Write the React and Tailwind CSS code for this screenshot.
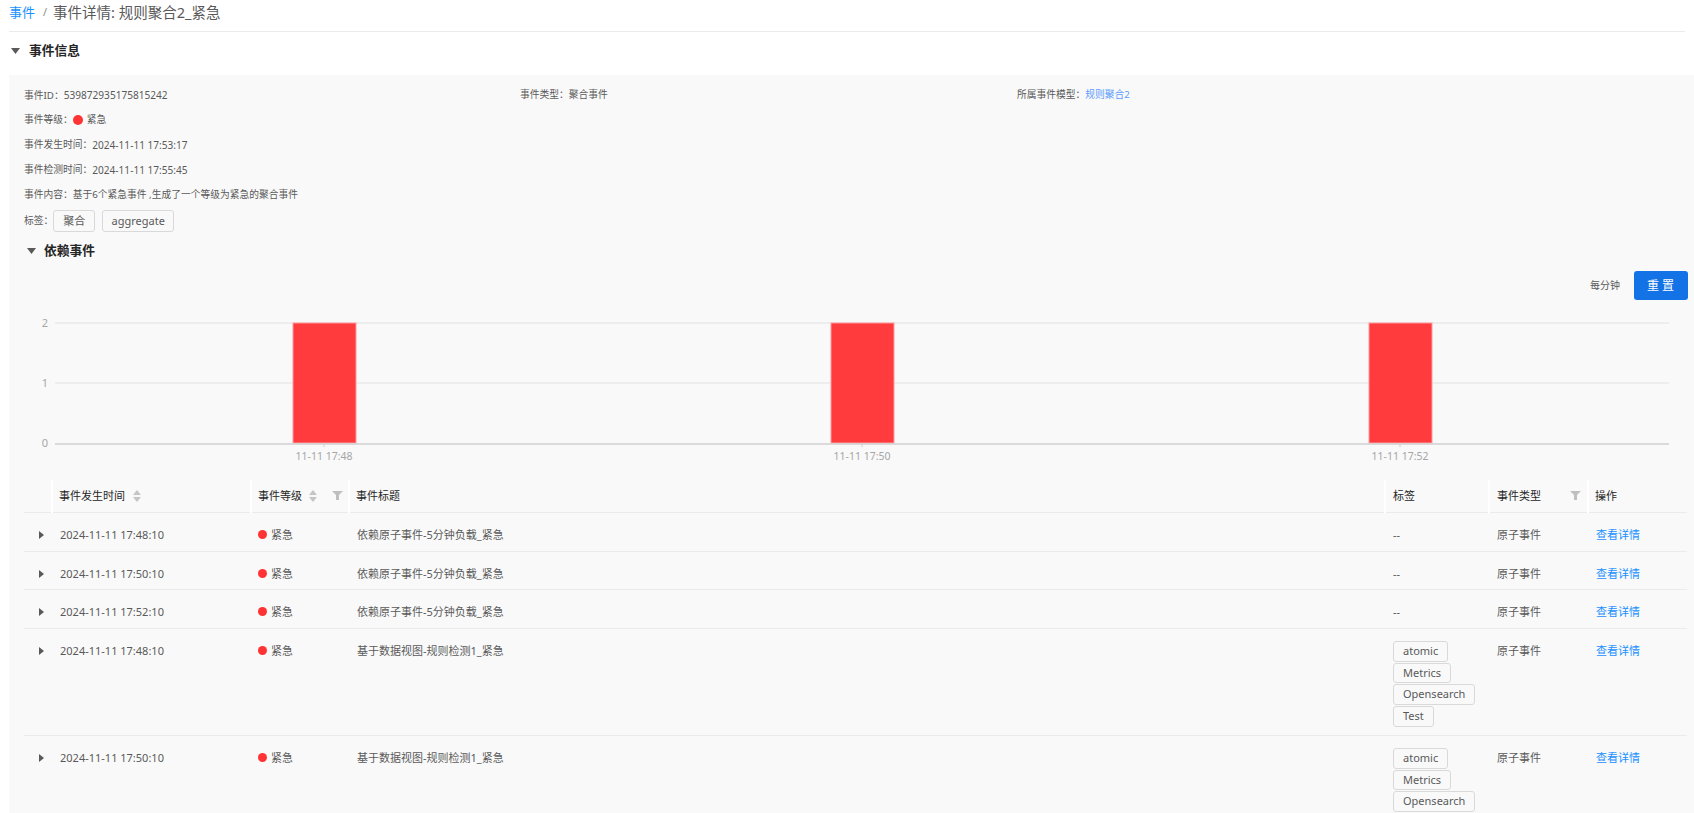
const rows = [
  { time: "2024-11-11 17:48:10", title: "依赖原子事件-5分钟负载_紧急", height: "h-[39px]" },
  { time: "2024-11-11 17:50:10", title: "依赖原子事件-5分钟负载_紧急", height: "h-[38px]" },
  { time: "2024-11-11 17:52:10", title: "依赖原子事件-5分钟负载_紧急", height: "h-[39px]" },
  {
    time: "2024-11-11 17:48:10",
    title: "基于数据视图-规则检测1_紧急",
    height: "h-[107px]",
    tags: ["atomic", "Metrics", "Opensearch", "Test"],
  },
  {
    time: "2024-11-11 17:50:10",
    title: "基于数据视图-规则检测1_紧急",
    height: "h-[107px]",
    tags: ["atomic", "Metrics", "Opensearch", "Test"],
  },
];

function Caret() {
  return (
    <svg width="9" height="6" viewBox="0 0 9 6" className="shrink-0">
      <path d="M0 0H9L4.5 6Z" fill="#595959" />
    </svg>
  );
}

function ExpandCaret() {
  return (
    <svg width="5" height="8" viewBox="0 0 5 8">
      <path d="M0 0L5 4L0 8Z" fill="#595959" />
    </svg>
  );
}

function SortIcon() {
  return (
    <svg width="8" height="12" viewBox="0 0 8 12" className="shrink-0">
      <path d="M4 0L8 5H0Z" fill="#c4c4c4" />
      <path d="M0 7H8L4 12Z" fill="#c4c4c4" />
    </svg>
  );
}

function FilterIcon() {
  return (
    <svg width="11" height="9" viewBox="0 0 11 9" className="shrink-0">
      <path d="M0 0H11L7 4V9H4V4Z" fill="#bfbfbf" />
    </svg>
  );
}

function Tag({ children, className = "" }) {
  return (
    <span
      className={`inline-flex items-center border border-[#d9d9d9] rounded-[3px] text-[11px] text-[#595959] ${className}`}
    >
      {children}
    </span>
  );
}

function Level({ dotClass = "w-[9px] h-[9px]" }) {
  return (
    <span className="flex items-center gap-[4px]">
      <span className={`rounded-full bg-[#ff3333] ${dotClass}`} />
      紧急
    </span>
  );
}

function Chart() {
  const bars = [293, 831, 1369];
  const labels = [
    { x: 315, text: "11-11 17:48" },
    { x: 853, text: "11-11 17:50" },
    { x: 1391, text: "11-11 17:52" },
  ];
  return (
    <svg width="1685" height="170" viewBox="9 300 1685 170" className="block -ml-[15px]">
      <line x1="55" x2="1669" y1="323" y2="323" stroke="#e8e8e8" strokeWidth="1.5" />
      <line x1="55" x2="1669" y1="383" y2="383" stroke="#e8e8e8" strokeWidth="1.5" />
      {bars.map((x) => (
        <rect key={x} x={x} y="323" width="63" height="120" fill="#ff3b3d" stroke="#ff9c9c" strokeWidth="1" />
      ))}
      <line x1="55" x2="1669" y1="444" y2="444" stroke="#cfcfcf" strokeWidth="1.5" />
      {[
        ["2", 323],
        ["1", 383],
        ["0", 443],
      ].map(([t, y]) => (
        <text key={t} x="48" y={y + 4} textAnchor="end" fontSize="11" fill="#a6a6a6">
          {t}
        </text>
      ))}
      {labels.map((l) => (
        <g key={l.text}>
          <line x1={l.x + 9} x2={l.x + 9} y1="444" y2="447" stroke="#cfcfcf" />
          <text x={l.x + 9} y="460" textAnchor="middle" fontSize="10.5" fill="#a6a6a6">
            {l.text}
          </text>
        </g>
      ))}
    </svg>
  );
}

export default function App() {
  return (
    <div className="h-[813px] w-full overflow-hidden bg-white font-['Noto_Sans','Noto_Sans_CJK_SC',sans-serif]">
      {/* breadcrumb */}
      <div className="mx-[9px] h-[32px] border-b border-[#ebebeb] pb-[6px] flex items-center text-[14.5px] text-[#595959]">
        <span className="text-[#1890ff] text-[13px]">事件</span>
        <span className="ml-[8px] mr-[6px] text-[#8c8c8c] text-[11px]">/</span>
        <span>事件详情: 规则聚合2_紧急</span>
      </div>

      <div className="ml-[11px] h-[43px] flex items-center gap-[9px] pb-[6px]">
        <Caret />
        <span className="text-[12.75px] font-bold text-[#262626]">事件信息</span>
      </div>

      <div className="ml-[9px] bg-[#f9f9f9] pl-[15px] pt-[8px] text-[9.75px] text-[#595959] h-[800px]">
        <div className="grid grid-cols-[496px_497px_1fr] h-[25px] items-center">
          <span>
            事件ID：<span className="text-[10.1px]">539872935175815242</span>
          </span>
          <span>事件类型：聚合事件</span>
          <span>
            所属事件模型：<span className="text-[#5b9bff]">规则聚合2</span>
          </span>
        </div>
        <div className="h-[25px] flex items-center">
          事件等级：
          <Level dotClass="-mt-[2px] w-[10px] h-[10px]" />
        </div>
        <div className="h-[25px] flex items-center whitespace-pre">
          事件发生时间：<span className="text-[10.1px]">2024-11-11 17:53:17</span>
        </div>
        <div className="h-[25px] flex items-center whitespace-pre">
          事件检测时间：<span className="text-[10.1px]">2024-11-11 17:55:45</span>
        </div>
        <div className="h-[25px] flex items-center">事件内容：基于6个紧急事件 ,生成了一个等级为紧急的聚合事件</div>

        <div className="mt-[2px] h-[22px] flex items-center">
          <span>标签：</span>
          <Tag className="h-[22px] w-[42px] justify-center">聚合</Tag>
          <Tag className="h-[22px] w-[72px] justify-center ml-[7px]">aggregate</Tag>
        </div>

        <div className="mt-[7px] h-[24px] flex items-center gap-[8px] pl-[3px]">
          <Caret />
          <span className="text-[12.75px] font-bold text-[#262626]">依赖事件</span>
        </div>

        <div className="mt-[8px] h-[29px] flex items-center justify-end pr-[6px]">
          <span className="mr-[14px] text-[10px]">每分钟</span>
          <button className="w-[54px] h-[29px] rounded-[3px] bg-[#1272e6] text-white text-[12px] tracking-[3px] pl-[2px]">
            重置
          </button>
        </div>

        <Chart />

        <table className="mt-[10px] table-fixed border-collapse w-[1663px] text-[11px] text-[#595959]">
          <colgroup>
            <col className="w-[28px]" />
            <col className="w-[199px]" />
            <col className="w-[98px]" />
            <col className="w-[1036px]" />
            <col className="w-[104px]" />
            <col className="w-[99px]" />
            <col className="w-[99px]" />
          </colgroup>
          <thead>
            <tr className="h-[32px] border-b border-[#ebebeb] text-[#262626] font-normal text-left">
              <th className="border-r-2 border-white" />
              <th className="border-r-2 border-white pl-[6px] font-normal">
                <span className="flex items-center gap-[8px]">
                  事件发生时间
                  <SortIcon />
                </span>
              </th>
              <th className="border-r-2 border-white pl-[6px] font-normal">
                <span className="flex items-center">
                  事件等级
                  <span className="ml-[7px]">
                    <SortIcon />
                  </span>
                  <span className="ml-[15px]">
                    <FilterIcon />
                  </span>
                </span>
              </th>
              <th className="border-r-2 border-white pl-[6px] font-normal">事件标题</th>
              <th className="border-r-2 border-white pl-[7px] font-normal">标签</th>
              <th className="border-r-2 border-white pl-[7px] font-normal">
                <span className="flex items-center justify-between pr-[6px]">
                  事件类型
                  <FilterIcon />
                </span>
              </th>
              <th className="pl-[6px] font-normal">操作</th>
            </tr>
          </thead>
          <tbody>
            {rows.map((row, i) => (
              <tr key={i} className={`${row.height} border-b border-[#ebebeb] align-top`}>
                <td className="pt-[14px] pl-[15px]">
                  <span className="block mt-[4px]">
                    <ExpandCaret />
                  </span>
                </td>
                <td className="pt-[14px] pl-[8px] leading-[16px]">{row.time}</td>
                <td className="pt-[14px] pl-[7px] leading-[16px]">
                  <Level />
                </td>
                <td className="pt-[14px] pl-[8px] leading-[16px]">{row.title}</td>
                <td className={row.tags ? "pt-[12.5px] pl-[8px]" : "pt-[14px] pl-[8px] leading-[16px]"}>
                  {row.tags ? (
                    <div className="flex flex-col items-start gap-[1px]">
                      {row.tags.map((t) => (
                        <Tag key={t} className="h-[20.67px] px-[9px]">
                          {t}
                        </Tag>
                      ))}
                    </div>
                  ) : (
                    "--"
                  )}
                </td>
                <td className="pt-[14px] pl-[8px] leading-[16px]">原子事件</td>
                <td className="pt-[14px] pl-[8px] leading-[16px] text-[#1890ff]">查看详情</td>
              </tr>
            ))}
          </tbody>
        </table>
      </div>
    </div>
  );
}
